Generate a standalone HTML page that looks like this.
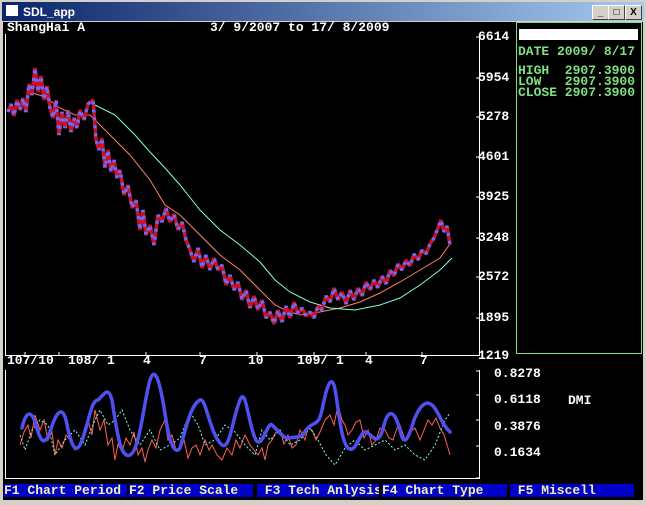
<!DOCTYPE html>
<html><head><style>
body{margin:0;width:646px;height:505px;overflow:hidden;background:#d4d0c8;font-family:"Liberation Mono",monospace;}
.win{position:absolute;left:0;top:0;width:646px;height:505px;background:#d4d0c8;}
.title{position:absolute;left:2px;top:2px;width:642px;height:19px;background:linear-gradient(90deg,#0a246a,#a6caf0);color:#fff;font:bold 12px "Liberation Sans",sans-serif;}
.title .ic{position:absolute;left:4px;top:3px;width:12px;height:11px;background:#fff;}
.title .t{position:absolute;left:21px;top:3px;}
.btn{position:absolute;top:3px;width:15px;height:13px;background:#d4d0c8;border:1px solid;border-color:#fff #404040 #404040 #fff;font:bold 10px "Liberation Sans",sans-serif;text-align:center;line-height:13px;color:#000;}
.c{position:absolute;left:3px;top:22px;width:640px;height:478px;background:#000;}
.tx{position:absolute;color:#fff;font:bold 13px "Liberation Mono",monospace;white-space:pre;line-height:12px;}
.g{color:#7ee07e;}
.m{position:absolute;top:484px;height:13px;background:#0000c8;color:#f0f0b0;font:bold 13px "Liberation Mono",monospace;white-space:pre;line-height:13px;overflow:hidden;}
</style></head><body><div class="win">
<div class="title"><div class="ic"></div><div class="t">SDL_app</div>
<div class="btn" style="left:590px">_</div><div class="btn" style="left:606px">□</div><div class="btn" style="left:623px">X</div></div>
<div class="c"></div>
<div class="tx" style="left:7px;top:22px">ShangHai A</div>
<div class="tx" style="left:210px;top:22px">3/ 9/2007 to 17/ 8/2009</div>
<svg style="position:absolute;left:0;top:0" width="646" height="505">
<g stroke="#fff" fill="none" stroke-width="1">
<path d="M5.5 34V355.5H479.5V34"/>
<path d="M5.5 370V478.5H479.5V370"/>
<path d="M476 37h4M476 78h4M476 117h4M476 157h4M476 197h4M476 238h4M476 277h4M476 318h4M476 395h4M476 420h4M476 446h4M476 478h4M476 371h4"/>
<path d="M25 352v4M59 352v4M146 352v4M200 352v4M257 352v4M314 352v4M366 352v4M422 352v4"/>
</g>
<rect x="516.5" y="22.5" width="125" height="331" fill="none" stroke="#7ee07e"/>
<rect x="519" y="29" width="119" height="11" fill="#fff"/>
<polyline fill="none" stroke="#ff8060" stroke-width="1" points="30,92 45,97 60,108 75,115 90,115 100,125 115,140 130,155 150,180 165,205 180,215 200,235 220,255 240,270 260,290 275,305 285,310 300,315 320,312 340,308 360,302 380,293 400,282 420,270 440,258 450,244"/>
<polyline fill="none" stroke="#80ffe0" stroke-width="1" points="95,105 115,115 135,135 150,152 165,168 180,185 200,210 220,230 240,245 260,262 275,280 290,292 310,302 330,308 355,310 380,305 400,298 420,285 440,270 452,258"/>
<g fill="none" stroke-width="3.5" stroke-linejoin="bevel">
<polyline stroke="#d01020" points="8,112 11,104 14,116 17,100 20,110 23,98 26,112 29,84 32,95 35,68 38,92 41,76 44,100 47,86 50,108 53,118 56,100 59,135 62,112 65,128 68,110 71,132 74,118 77,128 80,110 84,120 88,104 93,100 96,140 99,150 102,138 105,168 108,150 111,172 114,160 117,178 120,170 124,195 128,185 132,208 136,200 140,230 143,210 146,235 150,225 154,245 158,215 162,222 166,208 170,222 174,214 178,230 182,222 186,240 190,250 194,262 198,248 202,268 206,255 210,270 214,258 218,270 222,265 226,285 230,275 234,290 238,282 242,300 246,290 250,308 254,296 258,310 262,300 266,318 270,312 274,324 278,310 282,322 286,306 290,318 294,302 298,314 302,308 306,316 310,312 314,318 318,306 322,310 326,296 330,302 334,288 338,300 342,292 346,304 350,290 354,300 358,288 362,296 366,282 370,290 374,280 378,288 382,276 386,284 390,270 394,276 398,264 402,270 406,260 410,266 414,254 418,260 422,250 426,254 430,244 434,238 438,228 441,220 444,232 447,226 450,245"/>
<polyline stroke="#6a6aff" stroke-dasharray="3 5" points="8,112 11,104 14,116 17,100 20,110 23,98 26,112 29,84 32,95 35,68 38,92 41,76 44,100 47,86 50,108 53,118 56,100 59,135 62,112 65,128 68,110 71,132 74,118 77,128 80,110 84,120 88,104 93,100 96,140 99,150 102,138 105,168 108,150 111,172 114,160 117,178 120,170 124,195 128,185 132,208 136,200 140,230 143,210 146,235 150,225 154,245 158,215 162,222 166,208 170,222 174,214 178,230 182,222 186,240 190,250 194,262 198,248 202,268 206,255 210,270 214,258 218,270 222,265 226,285 230,275 234,290 238,282 242,300 246,290 250,308 254,296 258,310 262,300 266,318 270,312 274,324 278,310 282,322 286,306 290,318 294,302 298,314 302,308 306,316 310,312 314,318 318,306 322,310 326,296 330,302 334,288 338,300 342,292 346,304 350,290 354,300 358,288 362,296 366,282 370,290 374,280 378,288 382,276 386,284 390,270 394,276 398,264 402,270 406,260 410,266 414,254 418,260 422,250 426,254 430,244 434,238 438,228 441,220 444,232 447,226 450,245"/>
</g>
<polyline fill="none" stroke="#ff6050" stroke-width="1" points="20,445 24,432 28,425 31,438 35,415 40,430 44,420 48,440 52,432 55,455 58,440 62,448 66,435 70,440 75,450 80,445 84,430 88,420 92,435 95,410 100,430 104,420 108,445 112,438 115,460 118,444 122,452 126,438 130,445 134,432 138,455 142,448 145,462 148,450 152,440 156,448 160,430 165,420 168,440 172,435 176,450 180,450 184,440 188,458 192,448 196,445 200,455 205,440 209,450 212,445 217,455 222,460 227,448 232,455 236,440 240,448 245,435 250,445 254,450 258,455 262,448 265,460 268,445 272,440 276,432 280,430 284,444 288,435 292,448 296,445 300,430 305,440 308,428 312,430 316,440 320,432 325,420 330,415 334,425 338,405 342,420 345,425 348,435 352,430 356,422 360,420 364,438 368,430 372,445 376,440 380,428 385,430 389,438 393,440 397,428 400,425 405,440 410,432 415,428 420,440 424,430 428,420 432,425 436,418 440,428 444,435 448,448 450,455"/>
<polyline fill="none" stroke="#80ffe0" stroke-width="1" stroke-dasharray="2 2" points="20,435 25,450 32,430 40,420 48,425 55,455 65,440 75,430 85,445 95,420 100,410 108,425 115,420 122,410 130,430 140,445 150,430 160,450 170,445 180,438 190,412 198,425 205,445 215,440 225,425 235,432 245,445 255,455 262,430 270,440 280,430 290,445 300,440 310,428 318,440 326,455 335,465 345,448 355,440 365,450 375,445 385,440 395,450 405,445 415,455 425,460 435,445 445,420 450,413"/>
<path fill="none" stroke="#5050f0" stroke-width="3.5" stroke-linejoin="round" stroke-linecap="round" d="M22,428 C26,410 32,410 36,425 C40,440 44,448 50,432 C56,412 62,405 66,420 C70,440 74,455 80,445 C88,430 90,400 98,400 C104,395 108,385 112,400 C116,425 120,460 130,455 C140,450 144,400 150,380 C155,365 160,380 166,420 C170,445 175,455 180,448 C186,430 190,405 200,400 C206,397 210,435 222,445 C230,450 232,420 240,400 C246,385 248,425 256,440 C262,450 268,420 272,425 C278,430 284,440 290,438 C296,436 300,440 306,430 C314,420 318,428 322,410 C326,390 330,375 334,385 C338,400 340,440 348,448 C356,455 360,430 366,432 C372,434 378,450 384,425 C388,410 394,408 400,430 C404,448 408,440 414,420 C420,405 426,400 432,405 C438,410 442,425 450,432"/>
</svg>
<div class="tx" style="left:478px;top:31px">6614</div>
<div class="tx" style="left:478px;top:72px">5954</div>
<div class="tx" style="left:478px;top:111px">5278</div>
<div class="tx" style="left:478px;top:151px">4601</div>
<div class="tx" style="left:478px;top:191px">3925</div>
<div class="tx" style="left:478px;top:232px">3248</div>
<div class="tx" style="left:478px;top:271px">2572</div>
<div class="tx" style="left:478px;top:312px">1895</div>
<div class="tx" style="left:478px;top:350px">1219</div>
<div class="tx" style="left:7px;top:355px">107/10</div>
<div class="tx" style="left:68px;top:355px">108/ 1</div>
<div class="tx" style="left:143px;top:355px">4</div>
<div class="tx" style="left:199px;top:355px">7</div>
<div class="tx" style="left:248px;top:355px">10</div>
<div class="tx" style="left:297px;top:355px">109/ 1</div>
<div class="tx" style="left:365px;top:355px">4</div>
<div class="tx" style="left:420px;top:355px">7</div>
<div class="tx" style="left:494px;top:368px">0.8278</div>
<div class="tx" style="left:494px;top:394px">0.6118</div>
<div class="tx" style="left:494px;top:421px">0.3876</div>
<div class="tx" style="left:494px;top:447px">0.1634</div>
<div class="tx" style="left:568px;top:395px">DMI</div>
<div class="tx g" style="left:518px;top:46px">DATE 2009/ 8/17</div>
<div class="tx g" style="left:518px;top:65px;line-height:11px">HIGH  2907.3900
LOW   2907.3900
CLOSE 2907.3900</div>
<div class="m" style="left:4px;width:123px">F1 Chart Period</div>
<div class="m" style="left:129px;width:124px">F2 Price Scale</div>
<div class="m" style="left:257px;width:122px"> F3 Tech Anlysis</div>
<div class="m" style="left:382px;width:125px">F4 Chart Type</div>
<div class="m" style="left:510px;width:124px"> F5 Miscell</div>
</div></body></html>
